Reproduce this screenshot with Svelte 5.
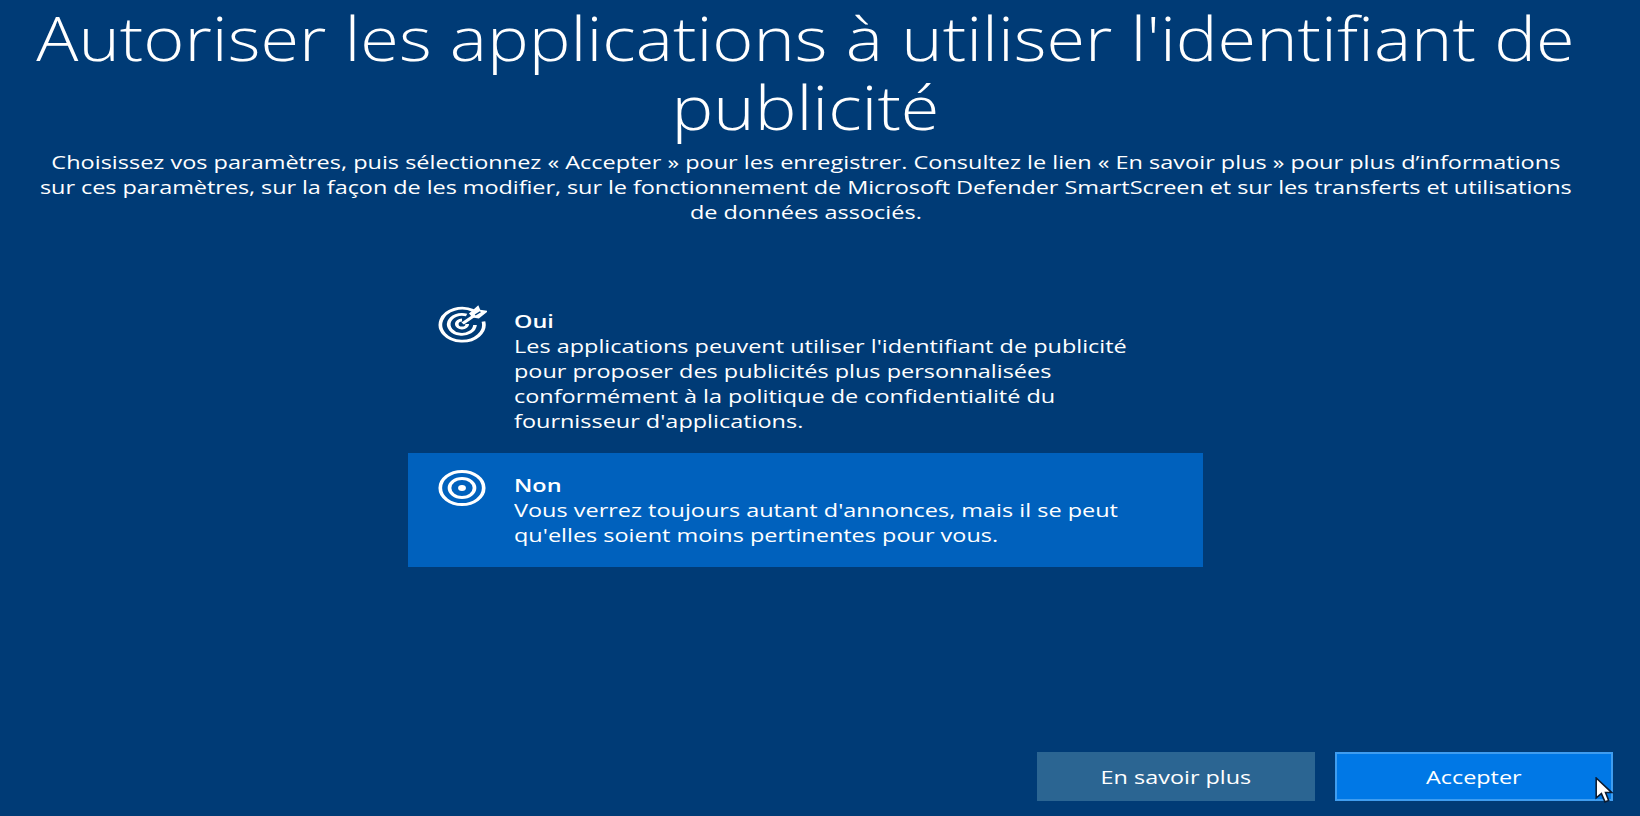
<script>
  const options = [
    { id: 'oui', title: 'Oui', lines: ["Les applications peuvent utiliser l'identifiant de publicité", 'pour proposer des publicités plus personnalisées', 'conformément à la politique de confidentialité du', "fournisseur d'applications."] },
    { id: 'non', title: 'Non', selected: true, lines: ["Vous verrez toujours autant d'annonces, mais il se peut", "qu'elles soient moins pertinentes pour vous."] }
  ];
</script>

<div class="page">
  <main class="main">
    <h1><div>Autoriser les applications à utiliser l'identifiant de</div><div>publicité</div></h1>
    <div class="intro">
      <div>Choisissez vos paramètres, puis sélectionnez « Accepter » pour les enregistrer. Consultez le lien « En savoir plus » pour plus d’informations</div>
      <div class="tight">sur ces paramètres, sur la façon de les modifier, sur le fonctionnement de Microsoft Defender SmartScreen et sur les transferts et utilisations</div>
      <div>de données associés.</div>
    </div>
    <div class="list">
      {#each options as o}
        <div class="row" class:selected={o.selected}>
          <svg class="icon" viewBox="0 0 38 38" preserveAspectRatio="none" aria-hidden="true">
            {#if o.id === 'oui'}
              <g fill="none" stroke="#fff" stroke-width="2.8">
                <path d="M27.500 5.500A16.500 16.500 0 1 0 35.300 16.500" />
                <path d="M22.500 10A10 10 0 1 0 28.900 20" />
                <path d="M19 15A4 4 0 1 0 23 19" />
                <path d="M19.500 18.500L30 9" />
              </g>
              <path d="M24.300 8.500L31.400 .2L32.800 4.800L39 6L31.800 13.500L27 12.500Z" fill="#fff" />
              <path d="M29 10L33 6.800" stroke="#003b76" stroke-width="1.200" fill="none" />
            {:else}
              <g fill="none" stroke="#fff" stroke-width="2.8">
                <circle cx="19" cy="19" r="16.500" />
                <circle cx="19" cy="19" r="9.500" />
              </g>
              <circle cx="19" cy="19" r="3" fill="#fff" />
            {/if}
          </svg>
          <div class="copy">
            <div class="name">{o.title}</div>
            {#each o.lines as l}<div>{l}</div>{/each}
          </div>
        </div>
      {/each}
    </div>
  </main>
  <footer class="actions">
    <button class="btn secondary"><span>En savoir plus</span></button>
    <button class="btn primary"><span>Accepter</span></button>
    <svg class="cursor" viewBox="0 0 20 26" aria-hidden="true"><path d="M2 1V20L7 16L10.500 24L14 22.500L11 15H17Z" fill="#fff" stroke="#0a1a30" stroke-width="1.500" /></svg>
  </footer>
</div>

<style>
  :global(body) { margin: 0; background: #003b76; }
  .page { width: 1640px; height: 816px; overflow: hidden; display: flex; flex-direction: column; color: #fff; font-family: "Open Sans", "Liberation Sans", sans-serif; position: relative; }
  .main { flex: 1; width: 1611px; display: flex; flex-direction: column; align-items: center; }
  h1 { margin: 0; font-weight: 300; font-size: 60px; line-height: 69px; text-align: center; padding-top: 4px; white-space: nowrap; transform: scaleX(1.17); }
  .intro { margin-top: 8px; font-size: 18px; line-height: 25px; text-align: center; white-space: nowrap; transform: scaleX(1.305); }
  .tight { letter-spacing: -0.06px; }
  .list { width: 795px; margin-top: 84px; }
  .row { display: flex; box-sizing: border-box; padding-left: 29px; }
  .row.selected { background: #0061bd; height: 114px; margin-top: 19px; padding-top: 20px; }
  .icon { width: 50px; height: 38px; flex: none; margin-top: -4px; }
  .copy { margin-left: 27px; font-size: 18px; line-height: 25px; white-space: nowrap; transform: scaleX(1.303); transform-origin: 0 0; }
  .name { font-weight: 600; }
  .actions { display: flex; gap: 20px; justify-content: flex-end; padding: 0 27px 15px 0; }
  .btn { width: 278px; height: 49px; border: 0; color: #fff; font: 18px "Open Sans", sans-serif; }
  .btn span { display: inline-block; transform: scaleX(1.3); }
  .secondary { background: #2b6592; }
  .primary { background: #0078e6; border: 2px solid #3f9df0; }
  .cursor { position: absolute; left: 1594px; top: 777px; width: 21px; height: 27px; }
</style>
